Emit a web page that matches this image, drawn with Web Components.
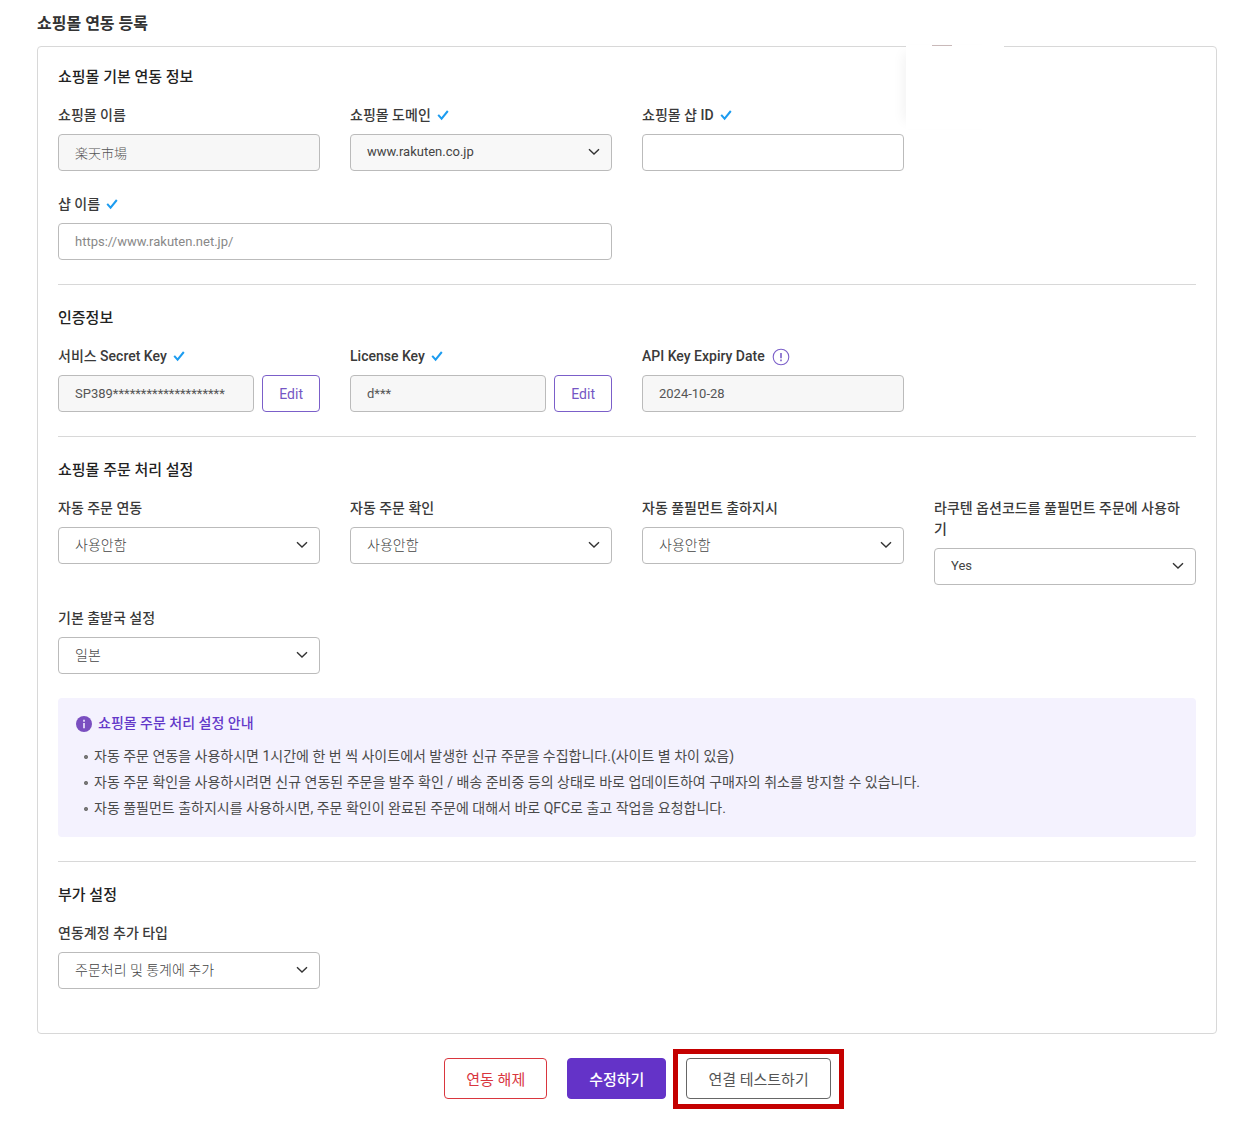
<!DOCTYPE html>
<html lang="ko">
<head>
<meta charset="utf-8">
<title>쇼핑몰 연동 등록</title>
<style>
  body {
    margin: 0;
    background: #fff;
    color: #333;
    font: 14px/21px Roboto, "Noto Sans CJK KR", sans-serif;
  }
</style>
</head>
<body>
<mall-page heading="쇼핑몰 연동 등록">
  <mall-section heading="쇼핑몰 기본 연동 정보">
    <mall-field label="쇼핑몰 이름" value="楽天市場" lang="ja" readonly></mall-field>
    <mall-select label="쇼핑몰 도메인" options="www.rakuten.co.jp" lang="en" required filled></mall-select>
    <mall-field label="쇼핑몰 샵 ID" required style="grid-column: span 2; width: calc(50% - 15px)"></mall-field>
    <mall-field label="샵 이름" placeholder="https://www.rakuten.net.jp/" lang="en" required style="grid-column: span 2"></mall-field>
  </mall-section>

  <mall-section heading="인증정보">
    <mall-field label="서비스 Secret Key" value="SP389********************" lang="en" required readonly>
      <mall-button slot="action" kind="edit">Edit</mall-button>
    </mall-field>
    <mall-field label="License Key" value="d***" lang="en" required readonly>
      <mall-button slot="action" kind="edit">Edit</mall-button>
    </mall-field>
    <mall-field label="API Key Expiry Date" value="2024-10-28" lang="en" hint readonly></mall-field>
  </mall-section>

  <mall-section heading="쇼핑몰 주문 처리 설정">
    <mall-select label="자동 주문 연동" options="사용안함,사용함"></mall-select>
    <mall-select label="자동 주문 확인" options="사용안함,사용함"></mall-select>
    <mall-select label="자동 풀필먼트 출하지시" options="사용안함,사용함"></mall-select>
    <mall-select label="라쿠텐 옵션코드를 풀필먼트 주문에 사용하기" options="Yes,No" lang="en"></mall-select>
    <mall-select label="기본 출발국 설정" options="일본,한국"></mall-select>
    <mall-notice slot="after" heading="쇼핑몰 주문 처리 설정 안내">
      <li>자동 주문 연동을 사용하시면 1시간에 한 번 씩 사이트에서 발생한 신규 주문을 수집합니다.(사이트 별 차이 있음)</li>
      <li>자동 주문 확인을 사용하시려면 신규 연동된 주문을 발주 확인 / 배송 준비중 등의 상태로 바로 업데이트하여 구매자의 취소를 방지할 수 있습니다.</li>
      <li>자동 풀필먼트 출하지시를 사용하시면, 주문 확인이 완료된 주문에 대해서 바로 QFC로 출고 작업을 요청합니다.</li>
    </mall-notice>
  </mall-section>

  <mall-section heading="부가 설정">
    <mall-select label="연동계정 추가 타입" options="주문처리 및 통계에 추가,주문처리에만 추가"></mall-select>
  </mall-section>

  <mall-button slot="actions" kind="danger">연동 해제</mall-button>
  <mall-button slot="actions" kind="primary">수정하기</mall-button>
  <mall-button slot="actions" kind="plain" marked>연결 테스트하기</mall-button>
</mall-page>

<script>
const CHECK = `<svg class="check" width="12" height="12" viewBox="0 0 12 12" aria-hidden="true"><path d="M1.2 5.8 4.6 9.6 10.8 2" fill="none" stroke="#1c9cf0" stroke-width="2"/></svg>`;
const HINT = `<svg class="hint" width="18" height="18" viewBox="0 0 18 18" aria-hidden="true"><circle cx="9" cy="9" r="7.8" fill="none" stroke="#7b5fc9" stroke-width="1.1"/><path d="M9 5v5.2M9 11.6v1.6" stroke="#7b5fc9" stroke-width="1.6"/></svg>`;
const CHEVRON = `<svg class="chevron" width="12" height="8" viewBox="0 0 12 8" aria-hidden="true"><path d="M1 1.2 6 6 11 1.2" fill="none" stroke="#333" stroke-width="1.4"/></svg>`;

// Shared by text fields and selects.
const CONTROL_STYLE = `
  :host {
    display: block;
    min-width: 0;
  }
  label {
    display: block;
    margin-bottom: 8px;
    padding-right: 8px;
    font-weight: 500;
    color: #3a3a3a;
    word-break: break-all;
  }
  .check {
    margin-left: 6px;
    vertical-align: -1px;
  }
  .hint {
    margin-left: 7px;
    vertical-align: top;
    margin-top: 2px;
  }
  input, select {
    box-sizing: border-box;
    width: 100%;
    min-width: 0;
    height: 37px;
    margin: 0;
    padding: 0 16px;
    border: 1px solid #bbb;
    border-radius: 4px;
    background: #fff;
    color: #444;
    font: 300 14px Roboto, "Noto Sans CJK KR", sans-serif;
    outline: none;
  }
  :host([lang]) input, :host([lang]) select {
    font-size: 13px;
    font-weight: 400;
  }
  :host([lang="ja"]) input {
    font-family: "Noto Sans CJK JP", sans-serif;
    font-weight: 300;
  }
  input::placeholder {
    color: #888;
    opacity: 1;
  }
  input[readonly] {
    background: #f7f7f7;
    color: #555;
  }
`;

customElements.define("mall-page", class extends HTMLElement {
  connectedCallback() {
    if (this.shadowRoot)
      return;

    const shadow = this.attachShadow({ mode: "open" });
    shadow.innerHTML = `
      <style>
        :host {
          display: block;
          padding: 13px 41px 16px 37px;
        }
        h1 {
          margin: 0 0 11px;
          font-size: 16px;
          line-height: 22px;
          font-weight: 700;
        }
        main {
          position: relative;
          padding: 19px 20px 44px;
          border: 1px solid #d8d8d8;
          border-radius: 4px;
        }
        /* blank panel lying over the top edge of the card */
        .cover {
          position: absolute;
          top: -2px;
          right: 212px;
          width: 98px;
          height: 84px;
          background: #fff;
          box-shadow: -10px 0 12px -8px rgba(0, 0, 0, 0.06);
        }
        .cover::before {
          content: "";
          position: absolute;
          top: 0;
          left: 26px;
          width: 20px;
          height: 1px;
          background: #c9b9b9;
        }
        footer {
          display: flex;
          justify-content: center;
          gap: 20px;
          padding: 24px 0 0 21px;
        }
      </style>
      <h1></h1>
      <main><slot></slot><div class="cover"></div></main>
      <footer><slot name="actions"></slot></footer>
    `;
    shadow.querySelector("h1").textContent = this.getAttribute("heading");
  }
});

customElements.define("mall-section", class extends HTMLElement {
  connectedCallback() {
    if (this.shadowRoot)
      return;

    const shadow = this.attachShadow({ mode: "open" });
    shadow.innerHTML = `
      <style>
        :host {
          display: block;
        }
        :host(:not(:first-of-type)) {
          margin-top: 24px;
          padding-top: 22px;
          border-top: 1px solid #d8d8d8;
        }
        h2 {
          margin: 0 0 17px;
          font-size: 15px;
          line-height: 22px;
          font-weight: 500;
          color: #222;
        }
        .grid {
          display: grid;
          grid-template-columns: repeat(4, minmax(0, 1fr));
          gap: 23px 30px;
          align-items: start;
        }
        ::slotted([slot="after"]) {
          margin-top: 24px;
        }
      </style>
      <h2></h2>
      <div class="grid"><slot></slot></div>
      <slot name="after"></slot>
    `;
    shadow.querySelector("h2").textContent = this.getAttribute("heading");
  }
});

customElements.define("mall-field", class extends HTMLElement {
  connectedCallback() {
    if (this.shadowRoot)
      return;

    const shadow = this.attachShadow({ mode: "open" });
    shadow.innerHTML = `
      <style>
        ${CONTROL_STYLE}
        .row {
          display: flex;
          gap: 8px;
        }
        input {
          flex: 1;
        }
      </style>
      <label for="control"><span></span>${this.hasAttribute("required") ? CHECK : ""}${this.hasAttribute("hint") ? HINT : ""}</label>
      <div class="row"><input id="control" type="text"><slot name="action"></slot></div>
    `;
    shadow.querySelector("span").textContent = this.getAttribute("label");

    const input = shadow.querySelector("input");
    input.value = this.getAttribute("value") || "";
    input.placeholder = this.getAttribute("placeholder") || "";
    input.readOnly = this.hasAttribute("readonly");
  }
});

customElements.define("mall-select", class extends HTMLElement {
  connectedCallback() {
    if (this.shadowRoot)
      return;

    const shadow = this.attachShadow({ mode: "open" });
    shadow.innerHTML = `
      <style>
        ${CONTROL_STYLE}
        .box {
          display: grid;
          align-items: center;
        }
        select, .chevron {
          grid-area: 1 / 1;
        }
        select {
          appearance: none;
          padding: 0 36px 2px 16px;
        }
        :host([filled]) select {
          background: #f8f8f8;
        }
        .chevron {
          justify-self: end;
          margin: 0 12px 2px 0;
          pointer-events: none;
        }
      </style>
      <label for="control"><span></span>${this.hasAttribute("required") ? CHECK : ""}</label>
      <div class="box"><select id="control"></select>${CHEVRON}</div>
    `;
    shadow.querySelector("span").textContent = this.getAttribute("label");

    const select = shadow.querySelector("select");
    for (const text of this.getAttribute("options").split(","))
      select.add(new Option(text));
  }
});

customElements.define("mall-notice", class extends HTMLElement {
  connectedCallback() {
    if (this.shadowRoot)
      return;

    const shadow = this.attachShadow({ mode: "open" });
    shadow.innerHTML = `
      <style>
        :host {
          display: block;
          padding: 15px 18px 16px;
          border-radius: 4px;
          background: #f4f2fe;
        }
        h3 {
          display: flex;
          align-items: center;
          gap: 6px;
          margin: 0 0 9px;
          font-size: 14px;
          line-height: 21px;
          font-weight: 500;
          color: #6338c9;
        }
        ul {
          margin: 0;
          padding: 0;
          list-style: none;
          color: #4a4a4a;
        }
        ::slotted(li) {
          padding-left: 18px;
          line-height: 26px;
          background: radial-gradient(circle at 10px 14px, #777 1.6px, transparent 2.4px);
        }
      </style>
      <h3>
        <svg width="16" height="16" viewBox="0 0 16 16" aria-hidden="true">
          <circle cx="8" cy="8" r="8" fill="#7a4fc0"/>
          <path d="M8 3.8v1.9M8 7v5.2" stroke="#d9cdf2" stroke-width="2"/>
        </svg>
        <span></span>
      </h3>
      <ul><slot></slot></ul>
    `;
    shadow.querySelector("span").textContent = this.getAttribute("heading");
  }
});

customElements.define("mall-button", class extends HTMLElement {
  connectedCallback() {
    if (this.shadowRoot)
      return;

    const shadow = this.attachShadow({ mode: "open" });
    shadow.innerHTML = `
      <style>
        :host {
          display: block;
          position: relative;
          flex: none;
        }
        button {
          height: 41px;
          padding: 0 21px;
          border: 1px solid #666;
          border-radius: 4px;
          background: #fff;
          color: #555;
          font: 400 15px Roboto, "Noto Sans CJK KR", sans-serif;
          cursor: pointer;
        }
        :host([kind="edit"]) button {
          height: 37px;
          padding: 0 16px;
          border-color: #7b5fc9;
          color: #7556c4;
          font-size: 14px;
        }
        :host([kind="danger"]) button {
          border-color: #d9363e;
          color: #d9363e;
        }
        :host([kind="primary"]) button {
          border-color: #6433c8;
          background: #6433c8;
          color: #fff;
          font-weight: 500;
        }
        :host([marked])::after {
          content: "";
          position: absolute;
          inset: -9px -13px -10px;
          border: 5px solid #c40000;
          pointer-events: none;
        }
      </style>
      <button type="button"><slot></slot></button>
    `;
  }
});
</script>
</body>
</html>
